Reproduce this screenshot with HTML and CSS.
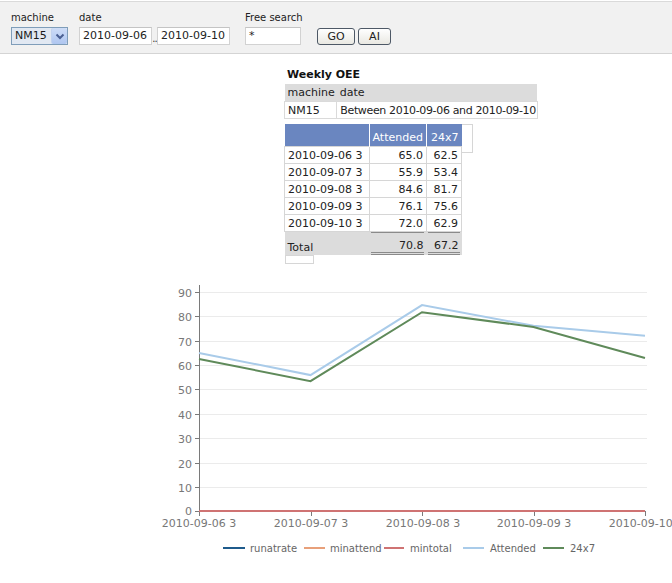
FILE: index.html
```html
<!DOCTYPE html>
<html>
<head>
<meta charset="utf-8">
<link rel="stylesheet" href="styles.css">
</head>
<body>
<form class="toolbar">
  <div class="field">
    <span class="label">machine</span>
    <div class="select"><span class="select-text">NM15</span><span class="select-btn"><svg width="10" height="7" viewBox="0 0 10 7"><path d="M1.5 1.5 L5 5 L8.5 1.5" fill="none" stroke="#4a5f92" stroke-width="2"/></svg></span></div>
  </div>
  <div class="field field-date">
    <span class="label">date</span>
    <div class="date-row"><span class="input w-date">2010-09-06</span><span class="dots">..</span><span class="input w-date">2010-09-10</span></div>
  </div>
  <div class="field field-search">
    <span class="label">Free search</span>
    <span class="input w-search">*</span>
  </div>
  <div class="buttons">
    <span class="btn btn-go">GO</span>
    <span class="btn btn-ai">AI</span>
  </div>
</form>

<div class="report">
  <div class="title">Weekly OEE</div>
  <table class="info">
    <tr class="info-head"><th class="c-machine">machine</th><th>date</th></tr>
    <tr class="info-row"><td>NM15</td><td class="range">Between 2010-09-06 and 2010-09-10</td></tr>
  </table>
  <div class="data-wrap">
    <table class="data">
      <tr class="data-head"><th class="c1"></th><th class="c2">Attended</th><th class="c3">24x7</th></tr>
      <tr><td>2010-09-06 3</td><td class="num">65.0</td><td class="num">62.5</td></tr>
      <tr><td>2010-09-07 3</td><td class="num">55.9</td><td class="num">53.4</td></tr>
      <tr><td>2010-09-08 3</td><td class="num">84.6</td><td class="num">81.7</td></tr>
      <tr><td>2010-09-09 3</td><td class="num">76.1</td><td class="num">75.6</td></tr>
      <tr><td>2010-09-10 3</td><td class="num">72.0</td><td class="num">62.9</td></tr>
      <tr class="total"><td class="total-label">Total</td><td class="num"><div class="sum">70.8</div></td><td class="num"><div class="sum">67.2</div></td></tr>
    </table>
    <div class="head-stub"></div>
  </div>
  <div class="foot-stub"></div>
</div>

<svg class="chart" width="672" height="313" viewBox="0 270 672 313">
  <g stroke="#ebebeb" stroke-width="1">
    <line x1="199" y1="487.5" x2="647" y2="487.5"/>
    <line x1="199" y1="463.5" x2="647" y2="463.5"/>
    <line x1="199" y1="438.5" x2="647" y2="438.5"/>
    <line x1="199" y1="414.5" x2="647" y2="414.5"/>
    <line x1="199" y1="389.5" x2="647" y2="389.5"/>
    <line x1="199" y1="365.5" x2="647" y2="365.5"/>
    <line x1="199" y1="341.5" x2="647" y2="341.5"/>
    <line x1="199" y1="316.5" x2="647" y2="316.5"/>
    <line x1="199" y1="292.5" x2="647" y2="292.5"/>
  </g>
  <g stroke="#7a7a7a" stroke-width="1">
    <line x1="199.5" y1="285" x2="199.5" y2="512"/>
    <line x1="195" y1="511.5" x2="199" y2="511.5"/>
    <line x1="195" y1="487.5" x2="199" y2="487.5"/>
    <line x1="195" y1="463.5" x2="199" y2="463.5"/>
    <line x1="195" y1="438.5" x2="199" y2="438.5"/>
    <line x1="195" y1="414.5" x2="199" y2="414.5"/>
    <line x1="195" y1="389.5" x2="199" y2="389.5"/>
    <line x1="195" y1="365.5" x2="199" y2="365.5"/>
    <line x1="195" y1="341.5" x2="199" y2="341.5"/>
    <line x1="195" y1="316.5" x2="199" y2="316.5"/>
    <line x1="195" y1="292.5" x2="199" y2="292.5"/>
    <line x1="199.5" y1="511" x2="199.5" y2="516"/>
    <line x1="311.5" y1="511" x2="311.5" y2="516"/>
    <line x1="422.5" y1="511" x2="422.5" y2="516"/>
    <line x1="534.5" y1="511" x2="534.5" y2="516"/>
    <line x1="645.5" y1="511" x2="645.5" y2="516"/>
  </g>
  <g class="ytick" text-anchor="end">
    <text x="192" y="515">0</text>
    <text x="192" y="491.5">10</text>
    <text x="192" y="467.5">20</text>
    <text x="192" y="442.5">30</text>
    <text x="192" y="418.5">40</text>
    <text x="192" y="393.5">50</text>
    <text x="192" y="369.5">60</text>
    <text x="192" y="345.5">70</text>
    <text x="192" y="320.5">80</text>
    <text x="192" y="296.5">90</text>
  </g>
  <g class="xtick" text-anchor="middle">
    <text x="199" y="527">2010-09-06 3</text>
    <text x="311" y="527">2010-09-07 3</text>
    <text x="423" y="527">2010-09-08 3</text>
    <text x="534" y="527">2010-09-09 3</text>
    <text x="646" y="527">2010-09-10 3</text>
  </g>
  <polyline points="199,511 645,511" fill="none" stroke="#1f5b8c" stroke-width="2"/>
  <polyline points="199,511 645,511" fill="none" stroke="#e8a07a" stroke-width="2"/>
  <polyline points="199,511 645,511" fill="none" stroke="#cf7373" stroke-width="2"/>
  <polyline points="199,352.9 310.5,375.1 422,305.1 533.5,325.8 645,335.8" fill="none" stroke="#a9cbe9" stroke-width="2"/>
  <polyline points="199,359 310.5,381.2 422,312.2 533.5,327 645,358" fill="none" stroke="#5f8a5a" stroke-width="2"/>
  <g class="legend">
    <line x1="223" y1="548" x2="245" y2="548" stroke="#1f5b8c" stroke-width="2"/>
    <text x="250" y="552">runatrate</text>
    <line x1="304" y1="548" x2="325" y2="548" stroke="#e8a07a" stroke-width="2"/>
    <text x="330" y="552">minattend</text>
    <line x1="384" y1="548" x2="404" y2="548" stroke="#cf7373" stroke-width="2"/>
    <text x="410" y="552">mintotal</text>
    <line x1="463" y1="548" x2="484" y2="548" stroke="#a9cbe9" stroke-width="2"/>
    <text x="490" y="552">Attended</text>
    <line x1="543" y1="548" x2="564" y2="548" stroke="#5f8a5a" stroke-width="2"/>
    <text x="570" y="552">24x7</text>
  </g>
</svg>
</body>
</html>
```

FILE: styles.css
```css
html, body {
  margin: 0;
  padding: 0;
  background: #ffffff;
}

body {
  font-family: "DejaVu Sans", Verdana, sans-serif;
  font-size: 11px;
  color: #222;
  width: 672px;
  overflow: hidden;
}

.toolbar {
  display: flex;
  align-items: flex-end;
  margin: 1px 0 0 0;
  padding: 10px 11px 8px 11px;
  background: #f1f1f1;
  border-top: 1px solid #dadada;
  border-bottom: 1px solid #d4d4d4;
}

.field {
  display: flex;
  flex-direction: column;
  gap: 3px;
}

.label {
  font-size: 10px;
  line-height: 12px;
  color: #222;
  white-space: nowrap;
}

.field-date {
  margin-left: 11px;
}

.field-search {
  margin-left: 15px;
  width: 56px;
}

.select {
  display: flex;
  align-items: stretch;
  box-sizing: border-box;
  width: 57px;
  height: 18px;
  border: 1px solid #7f9db9;
  background: #e1e8f2;
}

.select-text {
  flex: 1;
  padding-left: 3px;
  line-height: 16px;
  font-size: 11px;
  color: #1a1a1a;
}

.select-btn {
  width: 15px;
  display: flex;
  align-items: center;
  justify-content: center;
  background: linear-gradient(#cddcf7, #afc6f0);
  border-left: 1px solid #c2d2ee;
  border-radius: 2px;
}

.date-row {
  display: flex;
  align-items: flex-end;
}

.input {
  display: block;
  box-sizing: border-box;
  height: 18px;
  padding-left: 3px;
  line-height: 16px;
  border: 1px solid #d2d2d2;
  border-top-color: #c4c4c4;
  background: #fff;
  font-size: 11px;
  color: #222;
}

.w-date {
  width: 73px;
}

.w-search {
  width: 56px;
}

.dots {
  width: 5px;
  font-size: 10px;
  line-height: 12px;
  text-align: center;
  letter-spacing: -1px;
  color: #333;
}

.buttons {
  display: flex;
  gap: 3px;
  margin-left: 16px;
}

.btn {
  box-sizing: border-box;
  height: 17px;
  line-height: 15px;
  text-align: center;
  border: 1px solid #4d5866;
  border-radius: 3px;
  background: linear-gradient(#ffffff, #e9e8e2);
  font-size: 11px;
  color: #222;
}

.btn-go {
  width: 38px;
}

.btn-ai {
  width: 33px;
}

.report {
  margin-left: 284px;
  padding-top: 14px;
}

.title {
  font-weight: bold;
  font-size: 11px;
  line-height: 13px;
  padding-left: 3px;
  color: #111;
  margin-bottom: 3px;
}

table {
  border-collapse: collapse;
  font-size: 11px;
}

.info {
  white-space: nowrap;
}

.info th {
  background: #dcdcdc;
  font-weight: normal;
  text-align: left;
  padding: 0 2px 0 3px;
  height: 17px;
  line-height: 13px;
  color: #222;
}

.info .c-machine {
  width: 41px;
}

.info td {
  border: 1px solid #dadada;
  padding: 0 1px 0 3px;
  height: 16px;
  line-height: 13px;
  color: #222;
}

.info td.range {
  letter-spacing: -0.35px;
}

.data-wrap {
  display: flex;
  align-items: flex-start;
  margin-top: 5px;
}

.data {
  width: 178px;
  white-space: nowrap;
}

.data-head th {
  background: #6a86c0;
  color: #fff;
  font-weight: normal;
  text-align: right;
  vertical-align: bottom;
  padding: 0 3px 2px 3px;
  height: 20px;
  line-height: 13px;
  border-left: 1px solid #fff;
}

.data-head th.c1 {
  border-left: none;
  width: 78px;
}

.data-head th.c2 {
  width: 49px;
}

.data td {
  border: 1px solid #d6d6d6;
  padding: 0 3px;
  height: 16px;
  line-height: 13px;
  color: #222;
}

.data td.num {
  text-align: right;
}

.data tr.total td {
  background: #dcdcdc;
  border: none;
  height: 22px;
  vertical-align: bottom;
  padding: 0 1px 1px 3px;
}

.data tr.total td.num {
  padding: 0 2px;
}

.sum {
  border-top: 1px solid #8a8a8a;
  border-bottom: 3px double #8a8a8a;
  padding: 6px 1px 0 0;
  line-height: 13px;
}

.head-stub {
  box-sizing: border-box;
  width: 11px;
  height: 29px;
  border: 1px solid #d6d6d6;
  border-left: none;
}

.foot-stub {
  box-sizing: border-box;
  width: 29px;
  height: 9px;
  margin: 0 0 0 1px;
  border: 1px solid #d6d6d6;
}

.chart {
  display: block;
  margin-top: 6px;
}

.chart text {
  font-family: "DejaVu Sans", Verdana, sans-serif;
}

.ytick text,
.xtick text {
  font-size: 11px;
  fill: #777;
}

.legend text {
  font-size: 10px;
  fill: #666;
}
```
